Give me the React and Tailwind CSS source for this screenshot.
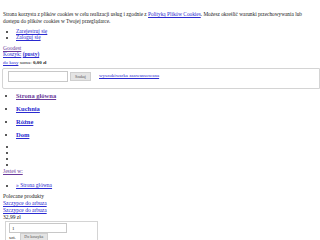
import React from 'react';

const link = 'text-[#2a2ad0] underline';
const visited = 'text-[#6a3a9a] underline';

const navItems = [
  { name: 'Strona główna', cls: visited },
  { name: 'Kuchnia', cls: link },
  { name: 'Różne', cls: link },
  { name: 'Dom', cls: link },
];

export default function App() {
  return (
    <div className="w-[320px] h-[240px] overflow-hidden bg-white text-[#222] text-[5.5px] leading-[7px] px-[3px] font-['Liberation_Serif',serif]">
      <p className="pt-[11px] text-[5.3px]">
        Strona korzysta z plików cookies w celu realizacji usług i zgodnie z{' '}
        <a className={link}>Polityką Plików Cookies</a>. Możesz określić warunki przechowywania lub dostępu do plików cookies w Twojej przeglądarce.
      </p>

      <ul className="mt-[3px] pl-[13px] list-disc leading-[6px]">
        <li><a className={link}>Zarejestruj się</a></li>
        <li><a className={link}>Zaloguj się</a></li>
      </ul>

      <div className="mt-[5px] leading-[6px]">
        <a className={visited}>Goodest</a>
      </div>
      <div className="leading-[6px]">
        <a className={link}>Koszyk:</a> <b className="text-[#2a2ad0] underline">(pusty)</b>
      </div>

      <div className="mt-[3px] text-[5px] leading-[6px]">
        <a className={link}>do kasy</a> suma: <b>0,00 zł</b>
      </div>

      <form className="mt-[2px] -mr-[3px] ml-[-1px] h-[21px] border border-[#d4d4d4] rounded-l-[2px] flex items-start gap-[2px] pl-[5px] pt-[2px]">
        <input className="w-[60px] h-[11px] border border-[#c8c8c8] bg-white" />
        <button type="button" className="mt-[1px] w-[21px] h-[9px] bg-[#e4e4e4] border border-[#cfcfcf] text-[4px] leading-[7px] text-[#555]">Szukaj</button>
        <a className={link + ' ml-[6px] mt-[2px] text-[5px] leading-[6px]'}>wyszukiwarka zaawansowana</a>
      </form>

      <ul className="pl-[13px] list-disc text-[6.5px] font-bold">
        {navItems.map((n) => (
          <li key={n.name} className="h-[13px] leading-[13px]">
            <a className={n.cls}>{n.name}</a>
          </li>
        ))}
      </ul>

      <ul className="pl-[13px] list-disc leading-[6px] mt-[2px]">
        <li>&nbsp;</li>
        <li>&nbsp;</li>
        <li>&nbsp;</li>
        <li>&nbsp;</li>
      </ul>

      <div className="mt-[1px] leading-[7px]">
        <a className={visited}>Jesteś w:</a>
      </div>

      <ul className="mt-[7px] pl-[13px] list-disc leading-[7px]">
        <li><a className={link}>» Strona główna</a></li>
      </ul>

      <div className="mt-[4px] leading-[7px]">Polecane produkty</div>
      <div className="leading-[7px]"><a className={link}>Szczypce do arbuza</a></div>
      <div className="leading-[7px]"><a className={link}>Szczypce do arbuza</a></div>
      <div className="leading-[7px]">32,99 zł</div>

      <div className="ml-[2px] w-[93px] h-[30px] border border-[#d4d4d4] pl-[3px] pt-[1px]">
        <input defaultValue="1" className="w-[58px] h-[10px] border border-[#c8c8c8] text-[5px] px-[2px]" />
        <div className="flex items-center gap-[4px] text-[5px]">
          <span>szt.</span>
          <button type="button" className="w-[28px] h-[8px] bg-[#e4e4e4] border border-[#cfcfcf] text-[4px] leading-[6px] text-[#555]">Do koszyka</button>
        </div>
      </div>
    </div>
  );
}
